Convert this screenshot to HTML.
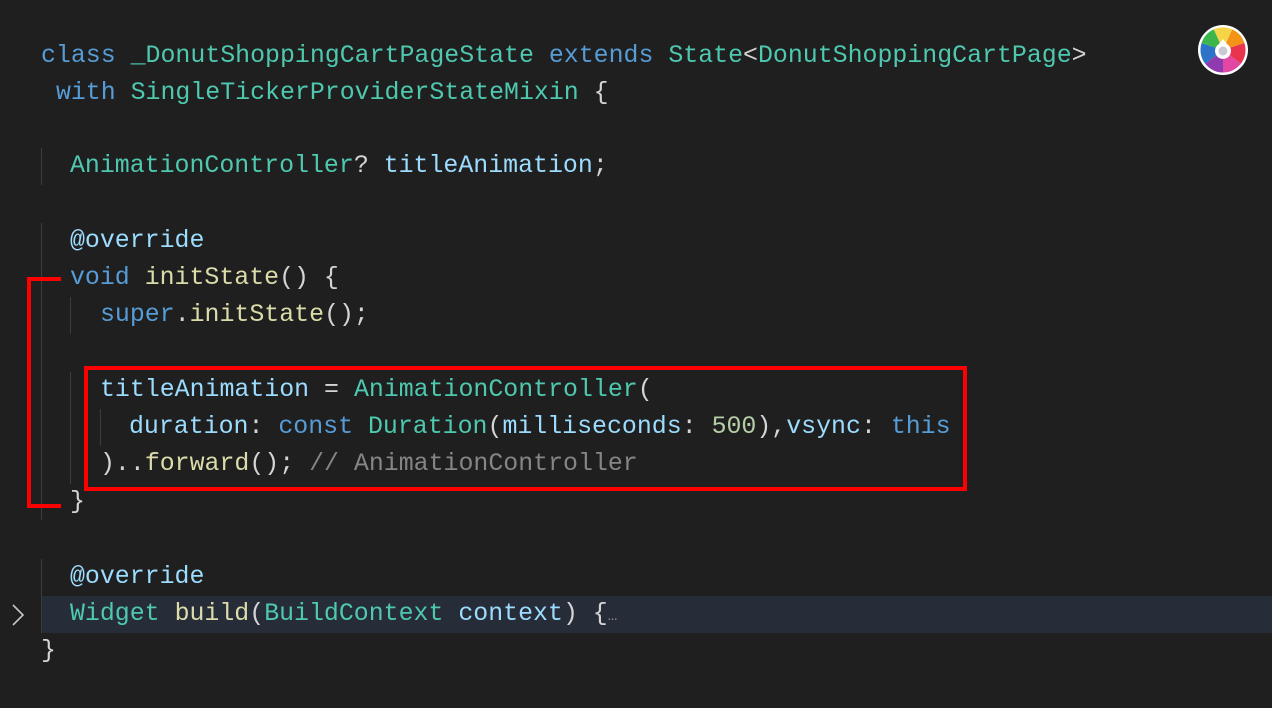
<!DOCTYPE html>
<html><head><meta charset="utf-8"><style>
body{margin:0;width:1272px;height:708px;background:#1f1f1f;overflow:hidden;position:relative;font-family:"Liberation Mono",monospace;font-size:24.9px;}
.l{position:absolute;left:0;height:37px;line-height:37px;white-space:pre;color:#d4d4d4;}
.k{color:#569cd6}.t{color:#4ec9b0}.f{color:#dcdcaa}.v{color:#9cdcfe}.n{color:#b5cea8}.c{color:#858585}.p{color:#d4d4d4}
.g{position:absolute;width:1px;background:#3c3c3c}
</style></head><body>
<div style="position:absolute;left:41px;top:596px;width:1231px;height:37px;background:#262c38"></div>
<div class="g" style="left:41px;top:148px;height:37px"></div>
<div class="g" style="left:41px;top:223px;height:297px"></div>
<div class="g" style="left:41px;top:559px;height:74px"></div>
<div class="g" style="left:70px;top:297px;height:37px"></div>
<div class="g" style="left:70px;top:372px;height:112px"></div>
<div class="g" style="left:100px;top:409px;height:37px"></div>

<div class="l" style="top:38px;left:41px"><span class="k">class</span> <span class="t">_DonutShoppingCartPageState</span> <span class="k">extends</span> <span class="t">State</span><span class="p">&lt;</span><span class="t">DonutShoppingCartPage</span><span class="p">&gt;</span></div>
<div class="l" style="top:75px;left:41px"> <span class="k">with</span> <span class="t">SingleTickerProviderStateMixin</span> {</div>
<div class="l" style="top:148px;left:70px"><span class="t">AnimationController</span>? <span class="v">titleAnimation</span>;</div>
<div class="l" style="top:223px;left:70px"><span class="v">@override</span></div>
<div class="l" style="top:260px;left:70px"><span class="k">void</span> <span class="f">initState</span>() {</div>
<div class="l" style="top:297px;left:100px"><span class="k">super</span>.<span class="f">initState</span>();</div>
<div class="l" style="top:372px;left:100px"><span class="v">titleAnimation</span> = <span class="t">AnimationController</span>(</div>
<div class="l" style="top:409px;left:129px"><span class="v">duration</span>: <span class="k">const</span> <span class="t">Duration</span>(<span class="v">milliseconds</span>: <span class="n">500</span>),<span class="v">vsync</span>: <span class="k">this</span></div>
<div class="l" style="top:446px;left:100px">)..<span class="f">forward</span>(); <span class="c">// AnimationController</span></div>
<div class="l" style="top:484px;left:70px">}</div>
<div class="l" style="top:559px;left:70px"><span class="v">@override</span></div>
<div class="l" style="top:596px;left:70px"><span class="t">Widget</span> <span class="f">build</span>(<span class="t">BuildContext</span> <span class="v">context</span>) {<span class="c" style="font-size:16px">…</span></div>
<div class="l" style="top:633px;left:41px">}</div>

<svg style="position:absolute;left:10px;top:603px" width="16" height="24"><path d="M3 2 L13 12 L3 22" stroke="#c5c5c5" stroke-width="1.6" fill="none"/></svg>

<div style="position:absolute;left:84px;top:366px;width:875px;height:117px;border:4px solid #f00"></div>
<div style="position:absolute;left:27px;top:277px;width:4px;height:231px;background:#f00"></div>
<div style="position:absolute;left:27px;top:277px;width:34px;height:4px;background:#f00"></div>
<div style="position:absolute;left:27px;top:504px;width:34px;height:4px;background:#f00"></div>

<svg style="position:absolute;left:1197px;top:24px" width="52" height="52" viewBox="-26 -26 52 52">
<circle r="25" fill="#fff"/>
<g>
<path d="M0 0 L-9.2 -20.6 A22.5 22.5 0 0 1 9.2 -20.6Z" fill="#f5d547"/>
<path d="M0 0 L9.2 -20.6 A22.5 22.5 0 0 1 21.4 -7Z" fill="#f39418"/>
<path d="M0 0 L21.4 -7 A22.5 22.5 0 0 1 17.8 13.8Z" fill="#e8354d"/>
<path d="M0 0 L17.8 13.8 A22.5 22.5 0 0 1 0 22.5Z" fill="#e347a4"/>
<path d="M0 0 L0 22.5 A22.5 22.5 0 0 1 -17.8 13.8Z" fill="#8e3bb0"/>
<path d="M0 0 L-17.8 13.8 A22.5 22.5 0 0 1 -21.4 -7Z" fill="#2d74c9"/>
<path d="M0 0 L-21.4 -7 A22.5 22.5 0 0 1 -9.2 -20.6Z" fill="#3cb54a"/>
</g>
<path d="M0 -11 L4 -6 A8 8 0 1 1 -4 -6Z" fill="#fff"/>
<circle r="4.5" cy="1" fill="#c9c9d4"/>
</svg>
</body></html>
